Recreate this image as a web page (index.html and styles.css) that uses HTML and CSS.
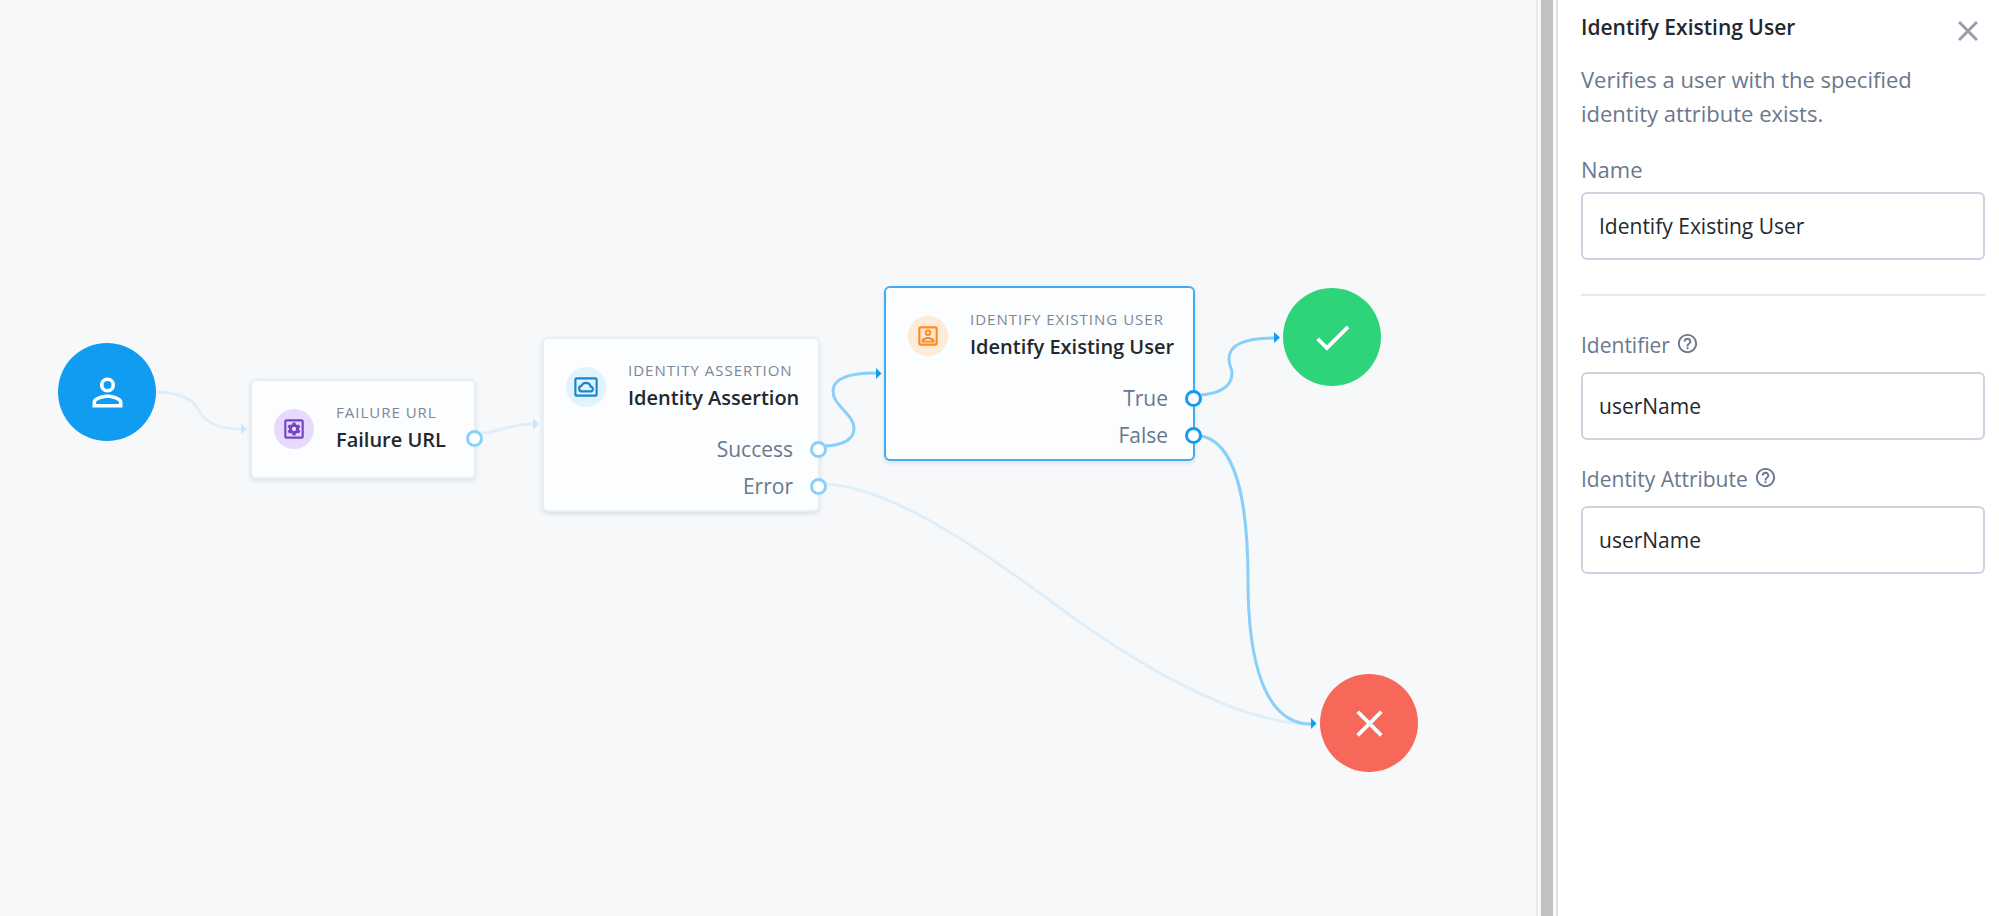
FILE: index.html
```html
<!DOCTYPE html>
<html lang="en">
<head>
<meta charset="utf-8">
<title>Authentication journey</title>
<link rel="stylesheet" href="styles.css">
</head>
<body>
<main class="canvas">
  <svg class="edges" aria-hidden="true">
    <g class="edge edge-dim">
      <path d="M156 392C175 392 193 398 198 409S215 429 241 429"/>
      <path class="arrow" d="M241 423.500L247 429L241 434.500Z"/>
      <path d="M482 433C500 432 510 424 533 424"/>
      <path class="arrow" d="M533 418.500L539 424L533 429.500Z"/>
      <path d="M826 484C894 488 985 552 1071 616C1165 683 1250 724 1311 724"/>
    </g>
    <g class="edge">
      <path d="M825 446C848 445 854 437 854 428C854 414 833 406 833 391C833 379 848 373 876 373"/>
      <path class="arrow" d="M876 368L881.500 373.500L876 379Z"/>
      <path d="M1201 395C1222 393 1232 385 1232 373C1232 367 1229 367 1229 359C1229 345 1245 338 1274 338"/>
      <path class="arrow" d="M1274 332L1280 337.500L1274 343Z"/>
      <path d="M1201 436C1235 442 1248 500 1248 580S1264 724 1311 724"/>
      <path class="arrow" d="M1311 718L1316.500 723.500L1311 729Z"/>
    </g>
  </svg>

  <div class="terminal terminal-start" role="img" aria-label="Start">
    <svg viewBox="0 0 24 24"><path d="M12 5.900a2.100 2.100 0 1 1 0 4.200 2.100 2.100 0 0 1 0-4.200m0 9c2.970 0 6.100 1.460 6.100 2.100v1.100H5.900V17c0-.64 3.130-2.100 6.100-2.100M12 4C9.790 4 8 5.790 8 8s1.790 4 4 4 4-1.790 4-4-1.790-4-4-4zm0 9c-2.670 0-8 1.340-8 4v3h16v-3c0-2.660-5.330-4-8-4z"/></svg>
  </div>

  <section class="node node-failure">
    <header class="node-head">
      <span class="badge badge-purple"><svg viewBox="0 0 24 24"><path fill-rule="evenodd" d="M5 3h14a2 2 0 0 1 2 2v14a2 2 0 0 1-2 2H5a2 2 0 0 1-2-2V5a2 2 0 0 1 2-2zm0 2v14h14V5z"/><path fill-rule="evenodd" d="M10.700 6h2.600l.4 1.700 1.200.7 1.700-.5 1.300 2.200-1.300 1.200v1.400l1.300 1.200-1.300 2.200-1.700-.5-1.200.7-.4 1.700h-2.600l-.4-1.700-1.200-.7-1.700.5-1.300-2.200 1.300-1.200v-1.400l-1.300-1.200 1.300-2.200 1.700.5 1.200-.7zM12 10a2 2 0 1 0 0 4 2 2 0 0 0 0-4z"/></svg></span>
      <div><p class="node-type">Failure URL</p><h2 class="node-title">Failure URL</h2></div>
    </header>
    <i class="port port-single"></i>
  </section>

  <section class="node node-assertion">
    <header class="node-head">
      <span class="badge badge-blue"><svg viewBox="0 0 24 24"><path fill-rule="evenodd" d="M3.200 3h17.600a2 2 0 0 1 2 2v14a2 2 0 0 1-2 2H3.200a2 2 0 0 1-2-2V5a2 2 0 0 1 2-2zm0 2v14h17.600V5z"/><path class="stroke" d="M8.500 16h7.500a2.150 2.150 0 0 0 .4-4.300 4.500 4.500 0 0 0-8.600-.7A2.500 2.500 0 0 0 8.500 16z"/></svg></span>
      <div><p class="node-type">Identity Assertion</p><h2 class="node-title">Identity Assertion</h2></div>
    </header>
    <ul class="outcomes">
      <li>Success<i class="port"></i></li>
      <li>Error<i class="port"></i></li>
    </ul>
  </section>

  <section class="node node-identify selected">
    <header class="node-head">
      <span class="badge badge-orange"><svg viewBox="0 0 24 24"><path fill-rule="evenodd" d="M5 3h14a2 2 0 0 1 2 2v14a2 2 0 0 1-2 2H5a2 2 0 0 1-2-2V5a2 2 0 0 1 2-2zm0 2v14h14V5z"/><path fill-rule="evenodd" d="M12 6a3 3 0 1 1 0 6 3 3 0 0 1 0-6zm0 1.800a1.200 1.200 0 1 0 0 2.400 1.200 1.200 0 0 0 0-2.400zM6 18v-1.500c0-2.500 4-3.500 6-3.500s6 1 6 3.500V18zm2.500-1.700h7c-.7-.8-2.200-1.500-3.500-1.500s-2.800.7-3.500 1.500z"/></svg></span>
      <div><p class="node-type">Identify Existing User</p><h2 class="node-title">Identify Existing User</h2></div>
    </header>
    <ul class="outcomes">
      <li>True<i class="port"></i></li>
      <li>False<i class="port"></i></li>
    </ul>
  </section>

  <div class="terminal terminal-success" role="img" aria-label="Success">
    <svg viewBox="0 0 24 24"><path d="M9 16.170 4.830 12l-1.420 1.410L9 19 21 7l-1.410-1.410z"/></svg>
  </div>
  <div class="terminal terminal-failure" role="img" aria-label="Failure">
    <svg viewBox="0 0 24 24"><path d="M19 6.410 17.590 5 12 10.590 6.410 5 5 6.410 10.590 12 5 17.590 6.410 19 12 13.410 17.590 19 19 17.590 13.410 12z"/></svg>
  </div>
</main>

<div class="gutter"><div class="thumb"></div></div>

<aside class="panel">
  <header class="panel-head">
    <h1 class="panel-title">Identify Existing User</h1>
    <button class="close" type="button" aria-label="Close"><svg viewBox="0 0 24 24"><path d="M19 6.410 17.590 5 12 10.590 6.410 5 5 6.410 10.590 12 5 17.590 6.410 19 12 13.410 17.590 19 19 17.590 13.410 12z"/></svg></button>
  </header>
  <p class="description">Verifies a user with the specified identity attribute exists.</p>
  <form class="form">
    <div class="field field-name">
      <label class="label label-large" for="name">Name</label>
      <input class="input" id="name" type="text" value="Identify Existing User">
    </div>
    <hr class="divider">
    <div class="field">
      <div class="label-row"><label class="label" for="identifier">Identifier</label><svg class="help" viewBox="0 0 24 24" aria-hidden="true"><path d="M11 18h2v-2h-2v2zm1-16C6.480 2 2 6.480 2 12s4.480 10 10 10 10-4.480 10-10S17.520 2 12 2zm0 18c-4.410 0-8-3.590-8-8s3.590-8 8-8 8 3.590 8 8-3.590 8-8 8zm0-14c-2.210 0-4 1.790-4 4h2c0-1.100.9-2 2-2s2 .9 2 2c0 2-3 1.750-3 5h2c0-2.250 3-2.500 3-5 0-2.210-1.790-4-4-4z"/></svg></div>
      <input class="input" id="identifier" type="text" value="userName">
    </div>
    <div class="field">
      <div class="label-row"><label class="label" for="attribute">Identity Attribute</label><svg class="help" viewBox="0 0 24 24" aria-hidden="true"><path d="M11 18h2v-2h-2v2zm1-16C6.480 2 2 6.480 2 12s4.480 10 10 10 10-4.480 10-10S17.520 2 12 2zm0 18c-4.410 0-8-3.590-8-8s3.590-8 8-8 8 3.590 8 8-3.590 8-8 8zm0-14c-2.210 0-4 1.790-4 4h2c0-1.100.9-2 2-2s2 .9 2 2c0 2-3 1.750-3 5h2c0-2.250 3-2.500 3-5 0-2.210-1.790-4-4-4z"/></svg></div>
      <input class="input" id="attribute" type="text" value="userName">
    </div>
  </form>
</aside>
</body>
</html>
```
FILE: styles.css
```css
* { box-sizing: border-box; }

body {
  display: flex;
  height: 100vh;
  margin: 0;
  background: #fff;
  color: #23282e;
  font-family: "Open Sans", sans-serif;
  font-size: 21px;
}

h1, h2, p, ul { margin: 0; padding: 0; }
ul { list-style: none; }
svg { display: block; fill: currentColor; }

/* Journey canvas */
.canvas {
  position: relative;
  flex: 1;
  min-width: 0;
  overflow: hidden;
  background: #f6f8fa;
}

.edges {
  position: absolute;
  inset: 0;
  width: 100%;
  height: 100%;
}
.edge { fill: none; stroke: #88cff9; stroke-width: 3; }
.edge .arrow { fill: #109cf1; stroke: none; }
.edge-dim { stroke: #deeffb; }
.edge-dim .arrow { fill: #cbe7fb; }

.terminal {
  position: absolute;
  display: grid;
  place-items: center;
  width: 98px;
  height: 98px;
  border-radius: 50%;
  color: #fff;
}
.terminal svg { width: 45px; height: 45px; }
.terminal-start { left: 58px; top: 343px; background: #109cf1; }
.terminal-success { left: 1283px; top: 288px; background: #2ed47a; }
.terminal-failure { left: 1320px; top: 674px; background: #f7685b; }

.node {
  position: absolute;
  border: 2px solid #e7eef4;
  border-radius: 6px;
  background: #fcfdff;
  box-shadow: 0 2px 4px rgba(60, 80, 100, 0.14);
}
.node-failure { left: 250px; top: 379px; width: 226px; padding-bottom: 8px; }
.node-assertion { left: 542px; top: 337px; width: 278px; }
.node-identify { left: 884px; top: 286px; width: 311px; }
.node.selected { border-color: #40adf3; }

.node-head {
  display: flex;
  align-items: center;
  gap: 22px;
  padding: 20px 0 12px 22px;
}
.badge {
  display: grid;
  place-items: center;
  width: 40px;
  height: 40px;
  border-radius: 50%;
}
.badge svg { width: 26px; height: 26px; }
.badge .stroke { fill: none; stroke: currentColor; stroke-width: 2; }
.badge-purple { background: #e6dbff; color: #7445c4; }
.badge-blue { background: #e1f3fd; color: #1a86cc; }
.badge-orange { background: #feebd7; color: #ff8a22; }

.node-type {
  color: #7b8797;
  font-size: 15px;
  line-height: 22px;
  letter-spacing: 1px;
  text-transform: uppercase;
  white-space: nowrap;
}
.node-title {
  font-size: 20px;
  font-weight: 600;
  line-height: 34px;
  white-space: nowrap;
}

.outcomes { padding: 4px 0 5px; color: #69788c; text-align: right; }
.outcomes li {
  position: relative;
  padding-right: 25px;
  line-height: 37px;
}

.port {
  position: absolute;
  right: -9px;
  top: 50%;
  width: 17px;
  height: 17px;
  margin-top: -9px;
  border: 3px solid #88cff9;
  border-radius: 50%;
  background: #fff;
}
.port-single { top: 60%; }
.selected .port { border-color: #109cf1; }

/* Scroll gutter */
.gutter {
  display: flex;
  justify-content: center;
  width: 22px;
  border-left: 2px solid #e9eaeb;
  border-right: 2px solid #e2e2e2;
  background: #fafafa;
}
.thumb { width: 12px; background: #c1c1c1; }

/* Properties panel */
.panel {
  width: 441px;
  padding: 10px 14px 24px 23px;
  color: #69788c;
}
.panel-head {
  display: flex;
  justify-content: space-between;
  align-items: flex-start;
}
.panel-title {
  color: #23282e;
  font-size: 21px;
  font-weight: 600;
  line-height: 34px;
}
.close {
  padding: 4px 0 0;
  border: 0;
  background: none;
  color: #929caa;
}
.close svg { width: 34px; height: 34px; }
.description { margin-top: 14px; font-size: 22px; line-height: 34px; }

.form { margin-top: 24px; }
.field { display: flex; flex-direction: column; gap: 12px; margin-top: 24px; }
.field-name { gap: 8px; }
.label-row { display: flex; align-items: center; gap: 6px; }
.label { font-size: 21px; line-height: 30px; }
.label-large { font-size: 22px; }
.help { width: 23px; height: 23px; margin-bottom: 4px; }
.input {
  width: 100%;
  height: 68px;
  padding: 0 16px;
  border: 2px solid #cbd4e0;
  border-radius: 6px;
  background: #fff;
  color: #23282e;
  font: inherit;
  font-size: 21px;
}
.divider {
  margin: 34px 0;
  border: 0;
  border-top: 2px solid #e7eaed;
}
```
